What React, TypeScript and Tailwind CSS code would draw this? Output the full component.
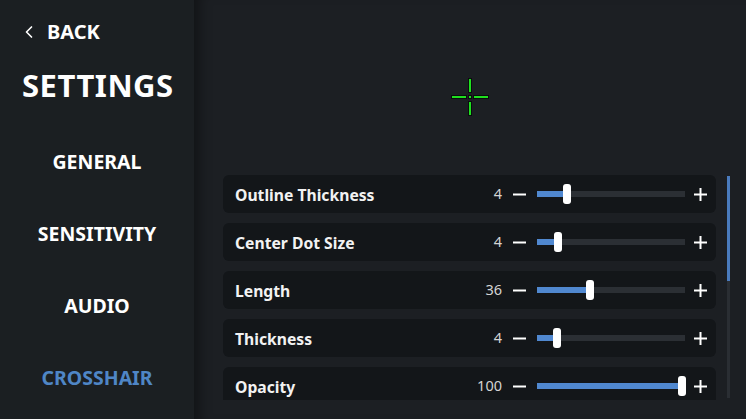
import { ChevronLeft } from "lucide-react";

const rows = [
  { label: "Outline Thickness", value: "4", pct: 20 },
  { label: "Center Dot Size", value: "4", pct: 14 },
  { label: "Length", value: "36", pct: 36 },
  { label: "Thickness", value: "4", pct: 13.5 },
  { label: "Opacity", value: "100", pct: 98 },
];

const menu = ["GENERAL", "SENSITIVITY", "AUDIO", "CROSSHAIR"];

const Crosshair = () => (
  <svg width="40" height="40" viewBox="0 0 40 40">
    <g fill="#0b0d0e">
      <rect x="18" y="1" width="4" height="15" />
      <rect x="18" y="24" width="4" height="15" />
      <rect x="1" y="18" width="16" height="4" />
      <rect x="23" y="18" width="16" height="4" />
      <rect x="18" y="18" width="4" height="4" />
    </g>
    <g fill="#1fe01f">
      <rect x="19" y="2" width="2" height="13" />
      <rect x="19" y="25" width="2" height="13" />
      <rect x="2" y="19" width="14" height="2" />
      <rect x="24" y="19" width="14" height="2" />
      <rect x="19" y="19" width="2" height="2" />
    </g>
  </svg>
);

const SettingRow = ({ label, value, pct }: { label: string; value: string; pct: number }) => (
  <div className="flex items-center h-[38px] shrink-0 rounded-md bg-[#131619] pl-3 pr-[9px]">
    <span className="flex-1 text-[15.7px] font-bold text-[#f2f2f2] translate-y-[1.5px]">{label}</span>
    <span className="w-[43px] text-right text-[14.5px] text-[#d4d4d4]">{value}</span>
    <span className="w-[35px] flex justify-center text-white">
      <svg width="13" height="13" viewBox="0 0 13 13">
        <rect x="0" y="5.5" width="13" height="2" fill="currentColor" />
      </svg>
    </span>
    <div className="relative w-[148px] h-[6px] bg-[#2b2f34]">
      <div className="absolute left-0 top-0 h-full bg-[#5088d0]" style={{ width: `${pct}%` }} />
      <div
        className="absolute top-1/2 -translate-y-1/2 -translate-x-1/2 w-[8px] h-[20px] rounded-[3px] bg-white"
        style={{ left: `${pct}%` }}
      />
    </div>
    <span className="w-[22px] flex justify-end text-white">
      <svg width="13" height="13" viewBox="0 0 13 13">
        <rect x="0" y="5.5" width="13" height="2" fill="currentColor" />
        <rect x="5.5" y="0" width="2" height="13" fill="currentColor" />
      </svg>
    </span>
  </div>
);

export default function App() {
  return (
    <div
      className="flex w-[746px] h-[419px] overflow-hidden bg-[#1c1f23]"
      style={{ fontFamily: '"Noto Sans", "Open Sans", sans-serif' }}
    >
      <div className="w-[194px] shrink-0 bg-[#1b1f22] flex flex-col">
        <div className="flex items-center h-[32px] mt-[16px] pl-[19px] text-white">
          <ChevronLeft size={20} strokeWidth={2} />
          <span className="ml-[8px] text-[20px] font-bold">BACK</span>
        </div>
        <div className="pl-[22px] mt-[22px] text-[31px] leading-none font-bold text-white tracking-[0.5px]">
          SETTINGS
        </div>
        <div className="flex flex-col items-center mt-[46px] gap-[43px]">
          {menu.map((m) => (
            <div
              key={m}
              className={`text-[19.5px] leading-[29px] font-bold ${m === "CROSSHAIR" ? "text-[#4f86c6]" : "text-white"}`}
            >
              {m}
            </div>
          ))}
        </div>
      </div>
      <div className="flex-1 flex flex-col shadow-[inset_14px_0_12px_-8px_rgba(0,0,0,0.35)]">
        <div className="h-[175px] flex justify-center pt-[77px]">
          <Crosshair />
        </div>
        <div className="flex h-[225px] pl-[29px] pr-[16px]">
          <div className="flex-1 flex flex-col gap-[10px] overflow-hidden">
            {rows.map((r) => (
              <SettingRow key={r.label} {...r} />
            ))}
          </div>
          <div className="ml-[11px] w-[3px] mt-[1px] h-[222px] bg-[#2a2e33]">
            <div className="h-[105px] bg-[#4a7bbd]" />
          </div>
        </div>
      </div>
    </div>
  );
}
